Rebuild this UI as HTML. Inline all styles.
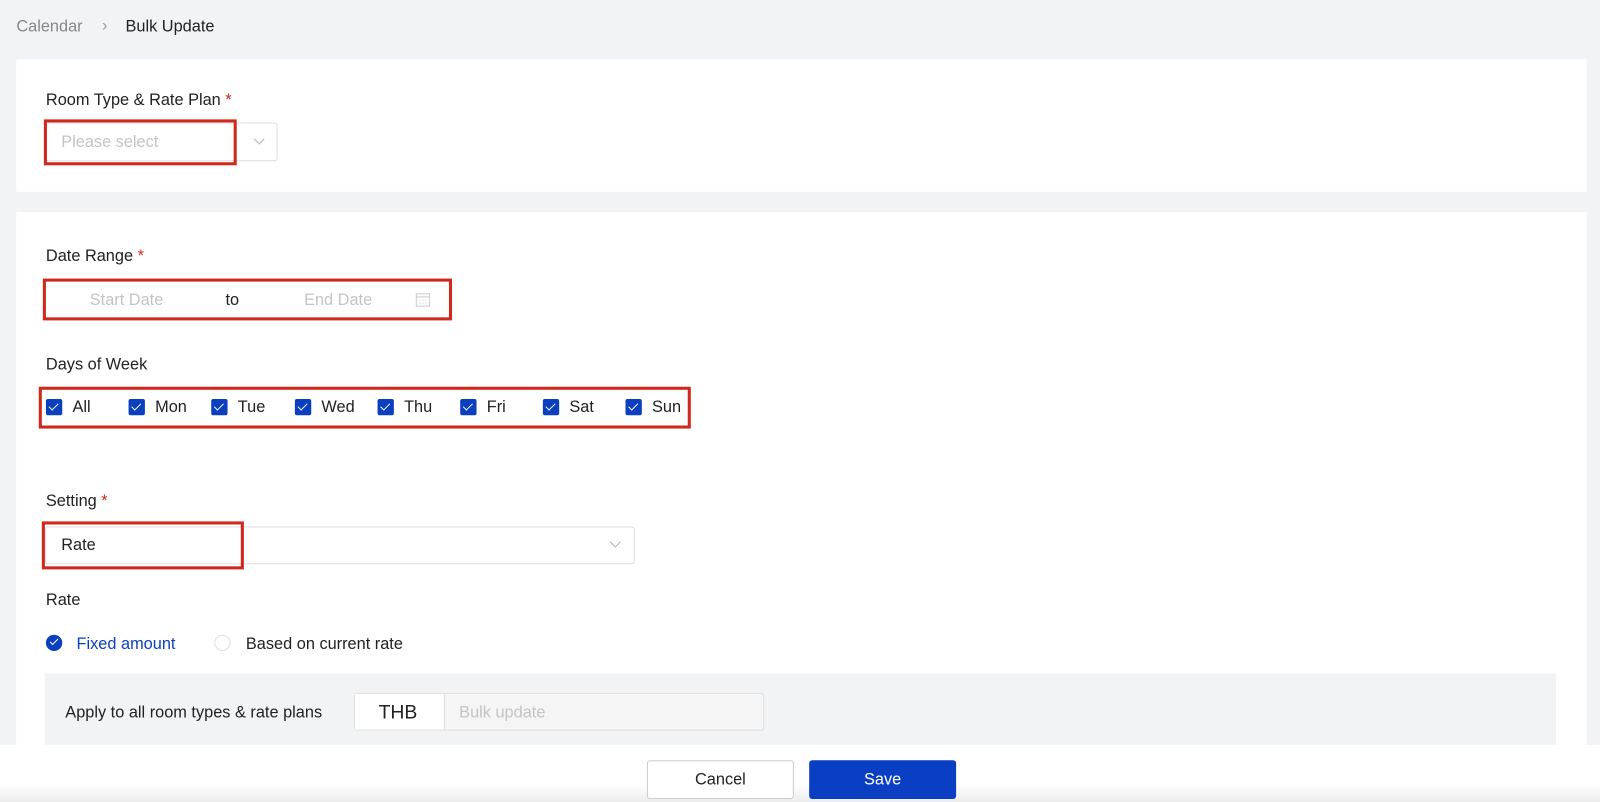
<!DOCTYPE html>
<html><head><meta charset="utf-8"><style>
html,body{margin:0;padding:0;width:1600px;height:802px;overflow:hidden;background:#f2f3f5;font-family:"Liberation Sans",sans-serif;}
#w{position:absolute;left:0;top:0;width:1568px;height:786px;transform:scale(1.0204);transform-origin:0 0;}
.a{position:absolute;}
.t{font-size:16px;color:#222;line-height:18px;white-space:nowrap;margin-top:1px;}
.star{color:#d0281c;}
.red{position:absolute;border:3px solid #d0281c;box-sizing:border-box;}
.cb{position:absolute;width:16px;height:16px;background:#0a3fbf;border-radius:2px;top:391px;}
.cb:after{content:"";position:absolute;left:5px;top:2px;width:4px;height:8px;border:solid #fff;border-width:0 1.5px 1.5px 0;transform:rotate(45deg);}
.d{position:absolute;top:391px;font-size:16px;color:#222;}
</style></head><body><div id="w">
<div class="a t" style="left:16px;top:17px;color:#888">Calendar</div>
<div class="a t" style="left:100px;top:16px;color:#999">›</div>
<div class="a t" style="left:123px;top:17px">Bulk Update</div>

<div class="a" style="left:16px;top:58px;width:1539px;height:130px;background:#fff"></div>
<div class="a t" style="left:45px;top:89px">Room Type &amp; Rate Plan <span class="star">*</span></div>
<div class="a" style="left:44px;top:120px;width:228px;height:38px;border:1px solid #ddd;border-radius:3px;box-sizing:border-box;background:#fff"></div>
<div class="a t" style="left:60px;top:130px;color:#c4c4c4">Please select</div>
<svg class="a" style="left:248px;top:135px" width="12" height="8"><path d="M1 1l5 5 5-5" fill="none" stroke="#bbb" stroke-width="1.2"/></svg>
<div class="red" style="left:43px;top:117px;width:189px;height:45px"></div>

<div class="a" style="left:16px;top:208px;width:1539px;height:540px;background:#fff"></div>
<div class="a t" style="left:45px;top:242px">Date Range <span class="star">*</span></div>
<div class="a t" style="left:88px;top:285px;color:#c4c4c4">Start Date</div>
<div class="a t" style="left:221px;top:285px">to</div>
<div class="a t" style="left:298px;top:285px;color:#c4c4c4">End Date</div>
<svg class="a" style="left:407px;top:286px" width="15" height="15"><rect x="1" y="2" width="13" height="12" fill="none" stroke="#ccc"/><line x1="1" y1="5" x2="14" y2="5" stroke="#ccc"/><path d="M4 8h1M7 8h1M10 8h1M4 11h1M7 11h1M10 11h1" stroke="#ccc"/></svg>
<div class="red" style="left:42px;top:273px;width:401px;height:41px"></div>

<div class="a t" style="left:45px;top:348px">Days of Week</div>
<div class="cb" style="left:45px"></div><div class="d" style="left:71px">All</div>
<div class="cb" style="left:126px"></div><div class="d" style="left:152px">Mon</div>
<div class="cb" style="left:207px"></div><div class="d" style="left:233px">Tue</div>
<div class="cb" style="left:289px"></div><div class="d" style="left:315px">Wed</div>
<div class="cb" style="left:370px"></div><div class="d" style="left:396px">Thu</div>
<div class="cb" style="left:451px"></div><div class="d" style="left:477px">Fri</div>
<div class="cb" style="left:532px"></div><div class="d" style="left:558px">Sat</div>
<div class="cb" style="left:613px"></div><div class="d" style="left:639px">Sun</div>
<div class="red" style="left:38px;top:379px;width:639px;height:41px"></div>

<div class="a t" style="left:45px;top:482px">Setting <span class="star">*</span></div>
<div class="a" style="left:44px;top:516px;width:578px;height:37px;border:1px solid #ddd;border-radius:3px;box-sizing:border-box"></div>
<svg class="a" style="left:597px;top:530px" width="12" height="8"><path d="M1 1l5 5 5-5" fill="none" stroke="#bbb" stroke-width="1.2"/></svg>
<div class="a t" style="left:60px;top:525px">Rate</div>
<div class="red" style="left:41px;top:511px;width:198px;height:47px"></div>

<div class="a t" style="left:45px;top:579px">Rate</div>
<div class="a" style="left:45px;top:622px;width:16px;height:16px;border-radius:50%;background:#0a3fbf"></div>
<div class="a" style="left:51px;top:624px;width:3px;height:7px;border:solid #fff;border-width:0 1.5px 1.5px 0;transform:rotate(45deg)"></div>
<div class="a t" style="left:75px;top:622px;color:#0a3fbf">Fixed amount</div>
<div class="a" style="left:210px;top:622px;width:16px;height:16px;border-radius:50%;border:1px solid #ddd;box-sizing:border-box"></div>
<div class="a t" style="left:241px;top:622px">Based on current rate</div>

<div class="a" style="left:44px;top:660px;width:1481px;height:80px;background:#f2f3f5"></div>
<div class="a t" style="left:64px;top:689px">Apply to all room types &amp; rate plans</div>
<div class="a" style="left:347px;top:679px;width:402px;height:37px;border:1px solid #ddd;border-radius:3px;box-sizing:border-box;background:#f5f5f5"></div>
<div class="a" style="left:348px;top:680px;width:87px;height:35px;background:#fff;border-right:1px solid #ddd"></div>
<div class="a" style="left:371px;top:688px;font-size:19px;color:#222">THB</div>
<div class="a t" style="left:450px;top:689px;color:#c4c4c4">Bulk update</div>

<div class="a" style="left:0;top:730px;width:1568px;height:56px;background:linear-gradient(#fff 0,#fff 70%,#ececec 100%)"></div>
<div class="a" style="left:634px;top:745px;width:144px;height:38px;border:1px solid #ccc;border-radius:3px;box-sizing:border-box;background:#fff;text-align:center;line-height:37px;font-size:16px;color:#222">Cancel</div>
<div class="a" style="left:793px;top:745px;width:144px;height:38px;border-radius:3px;background:#0a3fc4;text-align:center;line-height:39px;font-size:16px;color:#fff">Save</div>
</div></body></html>
